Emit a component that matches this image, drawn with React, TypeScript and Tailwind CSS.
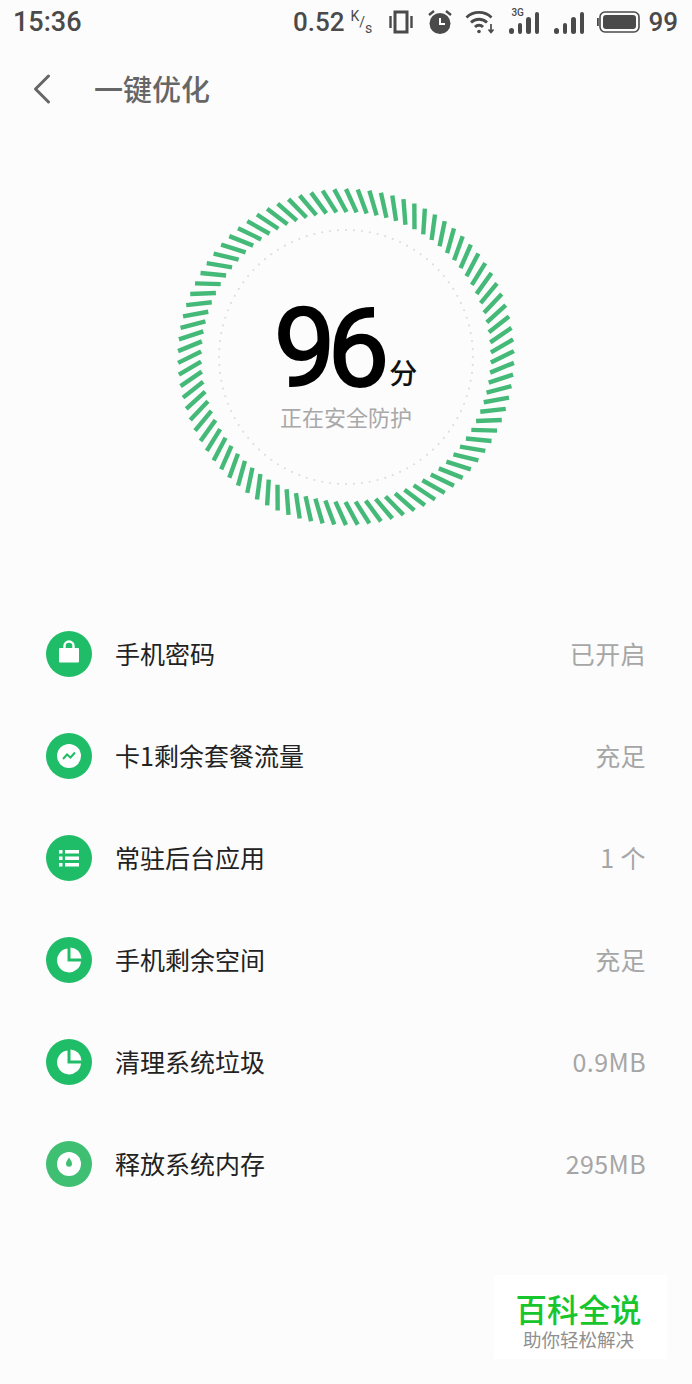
import type { ReactNode } from "react";
import { ChevronLeft } from "lucide-react";

const cjk = "font-['Noto_Sans_CJK_SC','Noto_Sans',sans-serif]";

function Ring() {
  const ticks = Array.from({ length: 90 });
  const dots = Array.from({ length: 100 });
  return (
    <svg width="340" height="340" viewBox="-170 -170 340 340" className="col-start-1 row-start-1">
      {ticks.map((_, i) => (
        <line
          key={i}
          x1="10.6"
          y1="-144.6"
          x2="0"
          y2="-168"
          stroke="#45b978"
          strokeWidth="4.4"
          transform={`rotate(${i * 4})`}
        />
      ))}
      {dots.map((_, i) => {
        const a = (i / 100) * Math.PI * 2;
        return <circle key={i} cx={Math.cos(a) * 127} cy={Math.sin(a) * 127} r="1.1" fill="#dedede" />;
      })}
    </svg>
  );
}

function Badge({ children, color = "bg-[#20bd68]" }: { children: ReactNode; color?: string }) {
  return (
    <div className={`mt-[2px] flex h-[46px] w-[46px] items-center justify-center rounded-full ${color}`}>
      <svg width="46" height="46" viewBox="0 0 46 46">
        {children}
      </svg>
    </div>
  );
}

const pie = (
  <>
    <path d="M21.5 11.5A12 12 0 1 0 35 24.5H21.5Z" fill="white" />
    <path d="M24.5 10.5A11.5 11.5 0 0 1 35.5 21.5H24.5Z" fill="white" />
  </>
);

const rows = [
  {
    label: "手机密码",
    value: "已开启",
    icon: (
      <>
        <path d="M18.5 17v-2a4.5 4.5 0 0 1 9 0v2" fill="none" stroke="white" strokeWidth="2.4" />
        <rect x="13" y="17" width="20" height="14.5" rx="1" fill="white" />
      </>
    ),
  },
  {
    label: "卡1剩余套餐流量",
    value: "充足",
    icon: (
      <>
        <circle cx="23" cy="23" r="12" fill="white" />
        <path d="M17 26l4-4.5 3.5 3 4.5-5" fill="none" stroke="#20bd68" strokeWidth="2" />
      </>
    ),
  },
  {
    label: "常驻后台应用",
    value: "1 个",
    icon: (
      <g fill="white">
        <rect x="13" y="15" width="3.5" height="3.5" />
        <rect x="19" y="15" width="14" height="3.5" />
        <rect x="13" y="21.5" width="3.5" height="3.5" />
        <rect x="19" y="21.5" width="14" height="3.5" />
        <rect x="13" y="28" width="3.5" height="3.5" />
        <rect x="19" y="28" width="14" height="3.5" />
      </g>
    ),
  },
  { label: "手机剩余空间", value: "充足", icon: pie },
  { label: "清理系统垃圾", value: "0.9MB", icon: pie },
  {
    label: "释放系统内存",
    value: "295MB",
    color: "bg-[#3fbf72]",
    icon: (
      <>
        <circle cx="23" cy="23" r="12" fill="white" />
        <path d="M23 16.5c2 3 3 4.5 3 6.3a3 3 0 0 1-6 0c0-1.8 1-3.3 3-6.3Z" fill="#3fbf72" />
      </>
    ),
  },
];

function Bars() {
  return (
    <>
      {[6, 11, 17, 22].map((h) => (
        <div key={h} className="w-[4.5px] rounded-full bg-[#4a4a4a]" style={{ height: h }} />
      ))}
    </>
  );
}

function StatusBar() {
  return (
    <div className="flex h-[44px] items-center justify-between pl-[13px] pr-[14px] text-[#4a4a4a] font-['Roboto',sans-serif] font-medium">
      <span className="text-[27px] leading-none">15:36</span>
      <div className="flex items-center">
        <span className="text-[26px] leading-none">0.52</span>
        <div className="ml-[6px] flex h-[26px] w-[24px] text-[14px] font-normal leading-none">
          <span className="self-start">K</span>
          <span className="self-center">/</span>
          <span className="self-end">s</span>
        </div>
        <svg width="24" height="24" viewBox="0 0 24 24" className="ml-[15px]" fill="none" stroke="#4a4a4a">
          <rect x="6" y="2" width="12" height="20" strokeWidth="3" />
          <path d="M1.5 6v12M22.5 6v12" strokeWidth="2.4" />
        </svg>
        <svg width="26" height="26" viewBox="0 0 26 26" className="ml-[14px]">
          <circle cx="13" cy="14.5" r="10.5" fill="#4a4a4a" />
          <path d="M2 6l5-4M24 6l-5-4" stroke="#4a4a4a" strokeWidth="2.4" />
          <path d="M13 9v6h5" stroke="white" strokeWidth="2" fill="none" />
        </svg>
        <svg width="30" height="26" viewBox="0 0 30 26" className="ml-[12px]" fill="none" stroke="#4a4a4a" strokeWidth="2.8">
          <path d="M1.5 8.5a18 18 0 0 1 25 0" />
          <path d="M6 13.5a11.5 11.5 0 0 1 16 0" />
          <path d="M10 18a5.5 5.5 0 0 1 8 0" />
          <circle cx="14" cy="22.5" r="1.8" fill="#4a4a4a" stroke="none" />
          <path d="M26 15v8M23.5 20.5l2.5 3 2.5-3" strokeWidth="1.7" />
        </svg>
        <div className="relative ml-[14px] flex h-[24px] items-end gap-[4px]">
          <span className="absolute left-[2px] top-[-2px] text-[10px] leading-none">3G</span>
          <Bars />
        </div>
        <div className="ml-[15px] flex h-[24px] items-end gap-[4px]">
          <Bars />
        </div>
        <svg width="43" height="24" viewBox="0 0 43 24" className="ml-[13px]">
          <rect x="3" y="2" width="39" height="20" rx="5" fill="none" stroke="#4a4a4a" strokeWidth="1.6" />
          <rect x="6" y="5" width="33" height="14" rx="3" fill="#4a4a4a" />
          <rect x="0" y="8" width="1.8" height="8" fill="#4a4a4a" />
        </svg>
        <span className="ml-[8px] text-[26px] leading-none">99</span>
      </div>
    </div>
  );
}

export default function App() {
  return (
    <div className={`relative h-[1384px] w-[692px] overflow-hidden bg-[#fcfcfc] ${cjk}`}>
      <StatusBar />

      {/* Title */}
      <div className="flex h-[90px] items-center pb-[1px]">
        <ChevronLeft size={52} strokeWidth={1.4} className="ml-[16px] text-[#666666]" />
        <span className="ml-[26px] text-[29px] font-medium leading-none text-[#666666]">一键优化</span>
      </div>

      {/* Score */}
      <div className="mt-[53px] grid justify-center">
        <Ring />
        <div className="col-start-1 row-start-1 flex flex-col items-center justify-center pt-[20px]">
          <div className="flex items-baseline pl-[1px] pr-[2px]">
            <span className="text-[110px] font-normal leading-[92px] tracking-[-8px] text-black [-webkit-text-stroke:2px_black] font-['Roboto',sans-serif]">96</span>
            <span className="ml-[8px] -translate-y-[2px] text-[28px] font-medium leading-none text-[#111111]">分</span>
          </div>
          <span className="mt-[6px] text-[22px] leading-[30px] text-[#a8a8a8]">正在安全防护</span>
        </div>
      </div>

      {/* Rows */}
      <div className="mt-[75px] flex flex-col pl-[46px] pr-[46px]">
        {rows.map((row) => (
          <div key={row.label} className="flex h-[102px] items-center">
            <Badge color={row.color}>{row.icon}</Badge>
            <span className="ml-[23px] text-[25px] leading-none text-[#222222]">{row.label}</span>
            <span className="ml-auto text-[25px] leading-none tracking-[0.4px] text-[#a6a6a6]">{row.value}</span>
          </div>
        ))}
      </div>

      {/* Watermark */}
      <div className="absolute left-[494px] top-[1275px] flex h-[84px] w-[173px] flex-col items-center bg-white pr-[4px] pt-[15px]">
        <span className="text-[31.5px] font-medium leading-[36px] text-[#17c52d]">百科全说</span>
        <span className="mt-[2px] text-[18.5px] leading-[22px] text-[#8f8f8f]">助你轻松解决</span>
      </div>
    </div>
  );
}
